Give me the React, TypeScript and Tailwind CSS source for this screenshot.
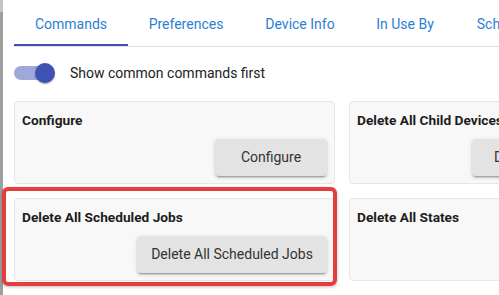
import React from "react";

const tabs = [
  { label: "Commands", w: "w-[114px]", active: true },
  { label: "Preferences", w: "w-[116px]" },
  { label: "Device Info", w: "w-[112px]" },
  { label: "In Use By", w: "w-[98px]" },
  { label: "Schedules", w: "w-[110px]" },
];

function Card({ title, button, btnW }: { title: string; button?: string; btnW?: string }) {
  return (
    <div className="h-[83px] rounded-[4px] border border-[#e6e6e6] bg-[#f8f8f8] px-[7px] pt-[8px] flex flex-col">
      <div className="text-[13.7px] leading-[20px] font-bold text-[#1d1d1d] whitespace-nowrap">{title}</div>
      {button && (
        <div className="mt-[9px] flex justify-end">
          <div
            className={`${btnW} h-[37px] rounded-[4px] bg-[#e3e3e3] flex items-center justify-center text-[14px] text-[#333] whitespace-nowrap shadow-[0_3px_1px_-2px_rgba(0,0,0,0.2),0_2px_2px_0_rgba(0,0,0,0.14),0_1px_5px_0_rgba(0,0,0,0.12)]`}
          >
            {button}
          </div>
        </div>
      )}
    </div>
  );
}

export default function App() {
  return (
    <div
      className="relative w-[499px] h-[295px] overflow-hidden bg-white flex"
      style={{ fontFamily: "Roboto, 'Liberation Sans', sans-serif" }}
    >
      <div className="w-[3px] shrink-0 flex flex-col">
        <div className="h-[12px] bg-[#c4c4c4]" />
        <div className="flex-1 bg-[#9e9e9e]" />
      </div>
      <div className="pl-[11px] flex-1 min-w-0">
        <div className="flex border-b border-[#e0e0e0] w-[600px]">
          {tabs.map((t) => (
            <div
              key={t.label}
              className={`${t.w} shrink-0 relative h-[46px] flex items-center justify-center text-[14px] text-[#2b7fd4] whitespace-nowrap`}
            >
              <span className="mt-[2px]">{t.label}</span>
              {t.active && <div className="absolute left-0 right-0 bottom-0 h-[2px] bg-[#3f51b5]" />}
            </div>
          ))}
        </div>
        <div className="mt-[12px] h-[28px] flex items-center">
          <div className="relative w-[42px] h-[20px]">
            <div className="absolute left-0 top-[3px] w-[34px] h-[14px] rounded-full bg-[#9fa8da]" />
            <div className="absolute left-[21px] top-0 w-[20px] h-[20px] rounded-full bg-[#3f51b5] shadow-[0_2px_1px_-1px_rgba(0,0,0,0.2),0_1px_1px_0_rgba(0,0,0,0.14),0_1px_3px_0_rgba(0,0,0,0.12)]" />
          </div>
          <span className="ml-[14px] text-[14px] text-[#212121] whitespace-nowrap">Show common commands first</span>
        </div>
        <div className="mt-[14px] grid grid-cols-[321px_321px] gap-[14px] w-[660px]">
          <Card title="Configure" button="Configure" btnW="w-[112px]" />
          <Card title="Delete All Child Devices" button="Delete All Child Devices" btnW="w-[190px]" />
          <Card title="Delete All Scheduled Jobs" button="Delete All Scheduled Jobs" btnW="w-[190px]" />
          <Card title="Delete All States" />
          <Card title="Initialize" button="Initialize" btnW="w-[112px]" />
          <Card title="Refresh" button="Refresh" btnW="w-[112px]" />
        </div>
      </div>
      <div className="absolute left-[2px] top-[187px] w-[335px] h-[99px] rounded-[6px] border-[4px] border-[#e53e3e] shadow-[0_1px_3px_rgba(0,0,0,0.25)]" />
    </div>
  );
}
